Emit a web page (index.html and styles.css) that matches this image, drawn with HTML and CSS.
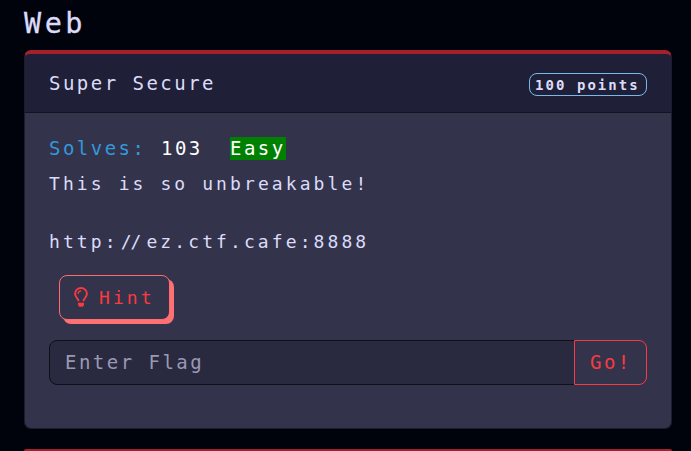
FILE: index.html
```html
<!DOCTYPE html>
<html lang="en">
<head>
<meta charset="utf-8">
<title>Challenges</title>
<link rel="stylesheet" href="styles.css">
</head>
<body>
<main class="page">
  <h1 class="category">Web</h1>
  <section class="card">
    <header class="card-header">
      <h2 class="card-title">Super Secure</h2>
      <span class="points">100 points</span>
    </header>
    <div class="card-body">
      <div class="meta"><span class="label">Solves:</span><span class="solves">103</span><span class="difficulty">Easy</span></div>
      <p class="text">This is so unbreakable!</p>
      <p class="text link">http:<span class="slashes">//</span>ez.ctf.cafe:8888</p>
      <button class="hint" type="button">
        <svg class="bulb" viewBox="0 0 14 20" fill="none" stroke="currentColor">
          <path d="M4.6 14.2C4.4 11.4 1.1 10.3 1.1 6.8C1.1 3.4 3.7 1 7 1s5.9 2.4 5.9 5.8c0 3.5-3.3 4.6-3.5 7.4" stroke-width="1.9"/>
          <path d="M3.9 6.9C4 5 5.2 3.9 7.2 3.8" stroke-width="1.3"/>
          <path d="M4 15.8h6v2.2L8.8 19.8H5.2L4 18z" fill="currentColor" stroke="none"/>
        </svg>
        <span>Hint</span>
      </button>
      <form class="flag-form">
        <input class="flag" type="text" placeholder="Enter Flag">
        <button class="submit" type="button">Go!</button>
      </form>
    </div>
  </section>
  <section class="card next"></section>
</main>
</body>
</html>
```

FILE: styles.css
```css
* { box-sizing: border-box; }
body {
  margin: 0;
  background: #00030c;
  color: #dcdcfa;
  font-family: "DejaVu Sans Mono", monospace;
  font-size: 19px;
  letter-spacing: 2.48px;
}
.page { height: 451px; padding: 0 19px 0 24px; overflow: hidden; }
h1, h2, p { margin: 0; font-weight: 400; }
.category { height: 50px; font-size: 28.5px; line-height: 48px; letter-spacing: 3.5px; -webkit-text-stroke: 0.3px #dcdcfa; }
.card {
  height: 379px;
  margin-bottom: 20px;
  border: 1px solid #1c1c2c;
  border-top: 4px solid #a51f2d;
  border-radius: 7px;
  background: #33334b;
  overflow: hidden;
}
.next {
  height: 2px;
  margin: 0;
  border-width: 2px 0 0;
  border-radius: 5px 5px 0 0;
}
.card-header {
  display: flex;
  align-items: center;
  justify-content: space-between;
  height: 59px;
  padding: 0 24px;
  background: #1f2037;
  border-bottom: 1px solid #13131f;
}
.card-title { font-size: 19px; line-height: 24px; }
.points {
  height: 23px;
  width: 118px;
  margin-top: 3px;
  padding-left: 5px;
  border: 1px solid #79b8e8;
  border-radius: 8px;
  font-size: 14px;
  font-weight: 700;
  line-height: 22px;
  letter-spacing: 2.05px;
  white-space: nowrap;
}
.card-body { padding: 24px; }
.meta { display: flex; height: 23px; line-height: 22px; color: #fff; }
.label { width: 112px; color: #3498db; }
.solves { width: 69px; }
.difficulty { width: 56px; background: #008000; }
.text { height: 24px; margin-top: 12px; font-size: 18px; line-height: 23px; letter-spacing: 3.09px; }
.link { margin-top: 34px; display: flex; }
.slashes { width: 27.8px; padding-left: 2px; letter-spacing: -1px; }
.hint {
  display: flex;
  align-items: center;
  width: 111px;
  height: 45px;
  margin: 21px 0 0 10px;
  padding: 0 0 0 14px;
  border: 1px solid #ff6b6e;
  border-radius: 8px;
  box-shadow: 4px 4px 0 #ff7073;
  background: #33334b;
  color: #f93a40;
  font: inherit;
  font-size: 18px;
  letter-spacing: 3.07px;
}
.bulb { flex: none; width: 14px; height: 20px; margin: 0 11px 1px 0; }
.flag-form { display: flex; height: 45px; margin-top: 20px; }
.flag {
  width: 526px;
  padding: 0 15px 1px;
  border: 1px solid #10101a;
  border-radius: 8px 0 0 8px;
  background: #29293f;
  font: inherit;
  letter-spacing: 2.48px;
}
.flag::placeholder { color: #9999b4; opacity: 1; }
.submit {
  width: 73px;
  margin-left: -1px;
  padding: 0 0 1px 15px;
  border: 1px solid #f93a40;
  border-radius: 0 8px 8px 0;
  background: #33334b;
  color: #f93a40;
  font: inherit;
  letter-spacing: 2.48px;
  text-align: left;
}
```
